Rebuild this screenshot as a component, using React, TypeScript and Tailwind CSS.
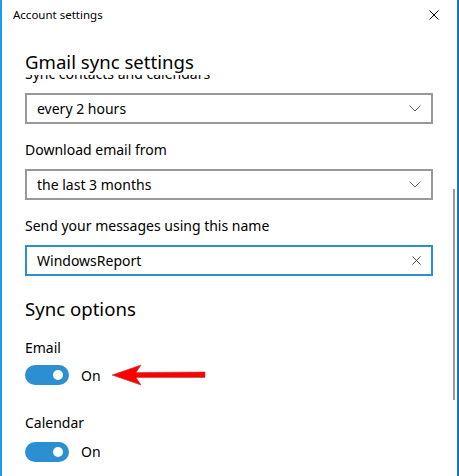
import * as React from "react";

const FONT = { fontFamily: '"Noto Sans", "Open Sans", sans-serif' };

function Chevron() {
  return (
    <svg width="12" height="7" viewBox="0 0 12 7" className="shrink-0">
      <polyline points="0.5,0.5 6,6 11.5,0.5" fill="none" stroke="#666" strokeWidth="1" />
    </svg>
  );
}

function CrossIcon({ size, color }: { size: number; color: string }) {
  return (
    <svg width={size} height={size} viewBox="0 0 10 10" className="shrink-0">
      <path d="M0.5 0.5 L9.5 9.5 M9.5 0.5 L0.5 9.5" stroke={color} strokeWidth="1" fill="none" />
    </svg>
  );
}

function Select({ value }: { value: string }) {
  return (
    <div className="flex h-[31px] items-center justify-between border-2 border-[#999] pl-[10px] pr-[10px] text-[14px] text-black">
      <span>{value}</span>
      <Chevron />
    </div>
  );
}

function Toggle() {
  return (
    <div className="flex items-center gap-[12px]">
      <div className="flex h-[20px] w-[44px] items-center justify-end rounded-full bg-[#2b8fd2] pr-[6px]">
        <div className="h-[10px] w-[10px] rounded-full bg-white" />
      </div>
      <span className="text-[14px] text-black">On</span>
    </div>
  );
}

function Arrow() {
  return (
    <svg width="96" height="24" viewBox="0 0 96 24" className="ml-[10px]">
      <polygon
        points="1,12 30,2 25,9.5 94,9 94,14.5 25,14.5 30,22"
        fill="#ff0000"
        stroke="#b04040"
        strokeWidth="0.6"
      />
    </svg>
  );
}

export default function App() {
  return (
    <div
      style={FONT}
      className="relative flex h-[476px] w-[459px] flex-col overflow-hidden border-l-2 border-r-2 border-l-[#1a9af0] border-r-[#1a6fc0] bg-white"
    >
      <div className="flex h-[30px] shrink-0 items-center justify-between pl-[11px] pr-[18px] text-[11.5px] text-black">
        <span>Account settings</span>
        <CrossIcon size={10} color="#000" />
      </div>

      <div className="relative z-10 h-[45px] shrink-0 bg-white pl-[23px] pt-[19px] text-[18.6px] leading-[26px] text-black">
        Gmail sync settings
      </div>

      <div className="relative flex-1 overflow-hidden">
        <div className="-mt-[11px] flex flex-col pl-[23px] pr-[24px] text-black">
          <div className="h-[20px] text-[14px] leading-[20px]">Sync contacts and calendars</div>
          <div className="mt-[9px]">
            <Select value="every 2 hours" />
          </div>

          <div className="mt-[16px] h-[20px] text-[14px] leading-[20px]">Download email from</div>
          <div className="mt-[9px]">
            <Select value="the last 3 months" />
          </div>

          <div className="mt-[16px] h-[20px] text-[14px] leading-[20px]">Send your messages using this name</div>
          <div className="mt-[9px] flex h-[31px] items-center justify-between border-2 border-[#2b8fd2] pl-[10px] pr-[10px] text-[14px]">
            <span>WindowsReport</span>
            <CrossIcon size={9} color="#333" />
          </div>

          <div className="mt-[19px] h-[28px] text-[18.6px] leading-[28px]">Sync options</div>

          <div className="mt-[15px] h-[20px] text-[14px] leading-[20px]">Email</div>
          <div className="mt-[5px] flex items-center">
            <Toggle />
            <Arrow />
          </div>

          <div className="mt-[26px] h-[20px] text-[14px] leading-[20px]">Calendar</div>
          <div className="mt-[8px]">
            <Toggle />
          </div>
        </div>

        <div className="absolute right-[2px] top-[114px] h-[211px] w-[2px] bg-[#999]" />
      </div>
    </div>
  );
}
